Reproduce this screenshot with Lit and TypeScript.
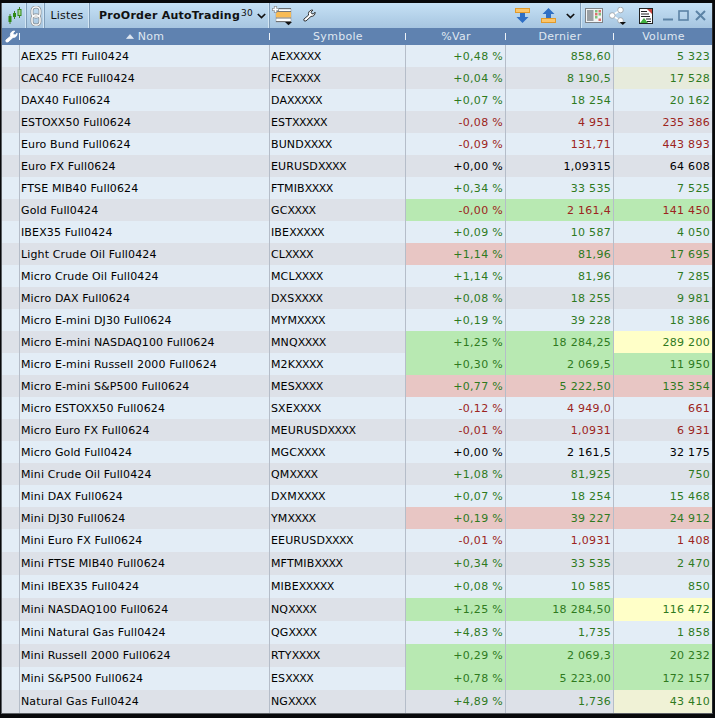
import { LitElement, html, css } from "lit";
import { customElement } from "lit/decorators.js";

type Tone = "up" | "down" | "flat";
type Row = [string, string, string, string, string, Tone, string?, string?, string?];

const G = "g", R = "r", Y = "y", P = "p", Q = "q";
const rows: Row[] = [
  ["AEX25 FTI Full0424", "AEXXXXX", "+0,48 %", "858,60", "5 323", "up"],
  ["CAC40 FCE Full0424", "FCEXXXX", "+0,04 %", "8 190,5", "17 528", "up", "", "", P],
  ["DAX40 Full0624", "DAXXXXX", "+0,07 %", "18 254", "20 162", "up"],
  ["ESTOXX50 Full0624", "ESTXXXXX", "-0,08 %", "4 951", "235 386", "down"],
  ["Euro Bund Full0624", "BUNDXXXX", "-0,09 %", "131,71", "443 893", "down"],
  ["Euro FX Full0624", "EURUSDXXXX", "+0,00 %", "1,09315", "64 608", "flat"],
  ["FTSE MIB40 Full0624", "FTMIBXXXX", "+0,34 %", "33 535", "7 525", "up"],
  ["Gold Full0424", "GCXXXX", "-0,00 %", "2 161,4", "141 450", "down", G, G, G],
  ["IBEX35 Full0424", "IBEXXXXX", "+0,09 %", "10 587", "4 050", "up"],
  ["Light Crude Oil Full0424", "CLXXXX", "+1,14 %", "81,96", "17 695", "up", R, R, R],
  ["Micro Crude Oil Full0424", "MCLXXXX", "+1,14 %", "81,96", "7 285", "up"],
  ["Micro DAX Full0624", "DXSXXXX", "+0,08 %", "18 255", "9 981", "up"],
  ["Micro E-mini DJ30 Full0624", "MYMXXXX", "+0,19 %", "39 228", "18 386", "up"],
  ["Micro E-mini NASDAQ100 Full0624", "MNQXXXX", "+1,25 %", "18 284,25", "289 200", "up", G, G, Y],
  ["Micro E-mini Russell 2000 Full0624", "M2KXXXX", "+0,30 %", "2 069,5", "11 950", "up", G, G, G],
  ["Micro E-mini S&P500 Full0624", "MESXXXX", "+0,77 %", "5 222,50", "135 354", "up", R, R, R],
  ["Micro ESTOXX50 Full0624", "SXEXXXX", "-0,12 %", "4 949,0", "661", "down"],
  ["Micro Euro FX Full0624", "MEURUSDXXXX", "-0,01 %", "1,0931", "6 931", "down"],
  ["Micro Gold Full0424", "MGCXXXX", "+0,00 %", "2 161,5", "32 175", "flat"],
  ["Mini Crude Oil Full0424", "QMXXXX", "+1,08 %", "81,925", "750", "up"],
  ["Mini DAX Full0624", "DXMXXXX", "+0,07 %", "18 254", "15 468", "up"],
  ["Mini DJ30 Full0624", "YMXXXX", "+0,19 %", "39 227", "24 912", "up", R, R, R],
  ["Mini Euro FX Full0624", "EEURUSDXXXX", "-0,01 %", "1,0931", "1 408", "down"],
  ["Mini FTSE MIB40 Full0624", "MFTMIBXXXX", "+0,34 %", "33 535", "2 470", "up"],
  ["Mini IBEX35 Full0424", "MIBEXXXXX", "+0,08 %", "10 585", "850", "up"],
  ["Mini NASDAQ100 Full0624", "NQXXXX", "+1,25 %", "18 284,50", "116 472", "up", G, G, Y],
  ["Mini Natural Gas Full0424", "QGXXXX", "+4,83 %", "1,735", "1 858", "up"],
  ["Mini Russell 2000 Full0624", "RTYXXXX", "+0,29 %", "2 069,3", "20 232", "up", G, G, G],
  ["Mini S&P500 Full0624", "ESXXXX", "+0,78 %", "5 223,00", "172 157", "up", G, G, G],
  ["Natural Gas Full0424", "NGXXXX", "+4,89 %", "1,736", "43 410", "up", "", "", Q],
];

const wrench = (w: number, fill: string, stroke: string) => html`<svg width=${w} height=${w} viewBox="0 0 14 14"><path d="M1.2 12.8 L0.9 10.9 L6 6.6 C5.4 4.2 6.4 1.8 9.2 1.2 L10.6 1.2 L8.6 3.4 L9.4 5 L11.2 5.4 L13 3.4 C13.3 6 11.6 8.2 8.6 8 L3.2 12.9 Z" fill=${fill} stroke=${stroke} stroke-width=".9" stroke-linejoin="round"/></svg>`;

const candles = html`<svg width="15" height="17" viewBox="0 0 15 17"><path d="M3 7v10M7.5 4v8M12.5 0v11" stroke="#3d7f2a" stroke-width="1"/><rect x="1.5" y="9" width="3" height="6" fill="#2f8a14"/><rect x="6" y="6" width="3" height="4" fill="#2f8a14"/><rect x="11" y="2.5" width="3" height="6" fill="#a9d492" stroke="#2f8a14"/></svg>`;
const chain = html`<svg width="12" height="20" viewBox="0 0 12 20"><g fill="none"><rect x="2" y="1" width="8" height="10" rx="3.6" stroke="#85898d" stroke-width="2.8"/><rect x="2" y="9" width="8" height="10" rx="3.6" stroke="#85898d" stroke-width="2.8"/><rect x="2" y="1" width="8" height="10" rx="3.6" stroke="#fafbfb" stroke-width="1.5"/><rect x="2" y="9" width="8" height="10" rx="3.6" stroke="#fafbfb" stroke-width="1.5"/></g></svg>`;
const chevron = html`<svg width="9" height="6" viewBox="0 0 9 6"><path d="M.8 1l3.7 3.5L8.2 1" fill="none" stroke="#111" stroke-width="1.7"/></svg>`;
const addList = html`<svg width="21" height="20" viewBox="0 0 21 20"><rect x="4" y="3" width="15" height="13" fill="#fff" stroke="#9aa0a5" stroke-width=".6"/><rect x="4" y="6" width="15" height="5.5" fill="#f8bb55"/><path d="M4 2.5h15M4 5.5h15M4 12h15M4 15.5h15" stroke="#555" stroke-width=".8"/><path d="M0 3.5h7M3.5 0v7" stroke="#8f9498" stroke-width="3.2"/><path d="M.8 3.5h5.4M3.5.8v5.4" stroke="#fff" stroke-width="1.5"/><path d="M13 16h7l-3.5 3.2z" fill="#111"/></svg>`;
const arrowDown = html`<svg width="15" height="15" viewBox="0 0 15 15"><rect x=".5" y=".5" width="14" height="4" fill="#fbc56a" stroke="#e29a2a"/><path d="M5 5h5v4h3.5l-6 6-6-6H5z" fill="#2f6fc4"/></svg>`;
const arrowUp = html`<svg width="15" height="15" viewBox="0 0 15 15"><rect x=".5" y="10.5" width="14" height="4" fill="#fbc56a" stroke="#e29a2a"/><path d="M5 10V6H1.5l6-6 6 6H10v4z" fill="#2f6fc4"/></svg>`;
const gridIcon = html`<svg width="18" height="15" viewBox="0 0 18 15"><rect x=".5" y=".5" width="17" height="14" fill="#f2f4f5" stroke="#7d8287"/><rect x="2" y="2" width="6.5" height="11" fill="#9aa0a5"/><g fill="#7fc27c"><rect x="10" y="2" width="2.5" height="2.5"/><rect x="10" y="8" width="2.5" height="2.5"/><rect x="13.5" y="5" width="2.5" height="2.5"/></g><g fill="#d9706a"><rect x="13.5" y="2" width="2.5" height="2.5"/><rect x="10" y="5" width="2.5" height="2.5"/><rect x="13.5" y="10.5" width="2.5" height="2.5"/></g></svg>`;
const share = html`<svg width="17" height="18" viewBox="0 0 17 18"><path d="M3 8.5L11.5 3M3 8.5l8.5 5" stroke="#fff" stroke-width="1.5"/><g fill="#fff" stroke="#8f9498" stroke-width=".7"><circle cx="3.2" cy="8.5" r="2.8"/><circle cx="11.5" cy="3" r="2.8"/><circle cx="11.5" cy="13.5" r="2.8"/></g><path d="M10.5 15h6.5l-3.2 3z" fill="#111"/></svg>`;
const report = html`<svg width="14" height="16" viewBox="0 0 14 16"><rect x=".5" y=".5" width="13" height="15" fill="#fff" stroke="#222"/><path d="M2 3.5h6M2 6h8M2 8.5h9M7 11h5M8 13.5h4" stroke="#222"/><path d="M8 1h5v5z" fill="#c8443c"/><path d="M1 15l4-5 4 5z" fill="#3fae3c"/></svg>`;
const sortUp = html`<svg width="8" height="5" viewBox="0 0 8 5"><path d="M4 .5L7.5 4.5H.5z" fill="#dfe7f1" stroke="#f4f7fa" stroke-width=".5"/></svg>`;

const symbol = (s: string) => {
  const m = s.match(/^(.*?)(X+)$/);
  return m ? html`${m[1]}<span class="xs">${m[2]}</span>` : s;
};

@customElement("app-root")
export class AppRoot extends LitElement {
  static styles = css`
    :host { display: block; width: 715px; height: 718px; background: #08090b; overflow: hidden;
      font: 11px "DejaVu Sans", sans-serif; --cols: 18px 250px 136px 100px 108px 98px; }
    .win { margin: 3px 2px 0 1px; height: 711px; box-sizing: border-box; border-left: 1px solid #5c6065; border-right: 1px solid #2a2c30; border-bottom: 1px solid #5c6065; display: flex; flex-direction: column; }
    .bar { height: 25px; flex: none; display: flex; background: linear-gradient(#c6e1f5, #a6c5e0); color: #111; white-space: nowrap; }
    .seg { display: flex; align-items: center; justify-content: center; box-sizing: border-box; border-right: 1px solid #7f9db9; box-shadow: inset -1px 0 0 #d3e6f4; flex: none; }
    .s1 { width: 25px; } .s2 { width: 18px; } .s3 { width: 45px; letter-spacing: .25px; } .s4 { width: 180px; justify-content: flex-start; padding-left: 9px; font-weight: 700; letter-spacing: .25px; }
    .s4 sup { font-size: 9px; font-weight: 400; letter-spacing: .3px; margin: 0 4px 0 1px; line-height: 1; position: relative; top: -2px; vertical-align: baseline; }
    .plain { display: flex; align-items: center; flex: none; }
    .add { margin-left: 2px; } .wr { margin-left: 10px; }
    .grow { flex: 1; }
    .up-d { margin-right: 11px; } .chev { margin: 0 2px 0 10px; }
    .rightgroup { width: 132px; box-sizing: border-box; border-left: 1px solid #7f9db9; box-shadow: inset 1px 0 0 #d3e6f4; display: flex; align-items: center; padding-left: 4px; flex: none; margin-left: 3px; }
    .sh { margin-left: 6px; } .rp { margin-left: 13px; }
    .ctl { margin-left: 10px; display: flex; gap: 4px; align-items: center; }
    .cl { margin-left: 2px; }
    .head { height: 17px; flex: none; display: grid; grid-template-columns: var(--cols); background: #5f82b0; color: #dfe7f1; letter-spacing: .3px; }
    .h { display: flex; align-items: center; }
    .h .lab { flex: 1; display: flex; align-items: center; justify-content: center; gap: 4px; padding-left: 1px; }
    .h i { width: 1px; height: 7px; background: #eef3f8; flex: none; }
    .row { display: grid; grid-template-columns: var(--cols); height: 22px; line-height: 24px; color: #000; white-space: pre; }
    .row.tall { height: 23px; line-height: 23px; }
    .row.odd { background: #e3edf6; } .row.even { background: #dde1e8; }
    .c { border-right: 1px solid #b5bdc9; box-sizing: border-box; overflow: hidden; }
    .c:last-child { border-right: 0; }
    .txt { padding-left: 1px; letter-spacing: .13px; }
    .xs { letter-spacing: -.54px; }
    .num { text-align: right; padding-right: 2px; letter-spacing: .3px; }
    .up .num { color: #2f7a1e; } .down .num { color: #9c2420; } .flat .num { color: #000; }
    .g { background: #b8e9b2; } .r { background: #e8c6c4; } .y { background: #ffffc8; } .p { background: #e7ebdc; } .q { background: #f0f2d6; }
  `;

  render() {
    return html`<div class="win">
      <div class="bar">
        <div class="seg s1">${candles}</div>
        <div class="seg s2">${chain}</div>
        <div class="seg s3">Listes</div>
        <div class="seg s4">ProOrder AutoTrading<sup>30</sup>${chevron}</div>
        <div class="plain add">${addList}</div>
        <div class="plain wr">${wrench(13, "#fff", "#111")}</div>
        <div class="grow"></div>
        <div class="plain up-d">${arrowDown}</div>
        <div class="plain">${arrowUp}</div>
        <div class="plain chev">${chevron}</div>
        <div class="rightgroup">
          ${gridIcon}
          <span class="plain sh">${share}</span>
          <span class="plain rp">${report}</span>
          <span class="ctl">
            <svg width="11" height="11" viewBox="0 0 11 11"><path d="M0 9.5h10" stroke="#5c83a5" stroke-width="2"/></svg>
            <svg width="11" height="11" viewBox="0 0 11 11"><rect x="1" y="1" width="9" height="9" fill="none" stroke="#5c83a5" stroke-width="1.6"/></svg>
            <svg class="cl" width="11" height="11" viewBox="0 0 11 11"><path d="M1 1l9 9M10 1l-9 9" stroke="#5c83a5" stroke-width="2"/></svg>
          </span>
        </div>
      </div>
      <div class="head">
        <div class="h"><span class="lab">${wrench(13, "#fff", "#fff")}</span><i></i></div>
        <div class="h"><span class="lab">${sortUp}<span>Nom</span></span><i></i></div>
        <div class="h"><span class="lab">Symbole</span><i></i></div>
        <div class="h"><span class="lab">%Var</span><i></i></div>
        <div class="h"><span class="lab">Dernier</span><i></i></div>
        <div class="h"><span class="lab">Volume</span></div>
      </div>
      ${rows.map((r, i) => html`<div class="row ${i % 2 ? "even" : "odd"} ${i >= 22 ? "tall" : ""} ${r[5]}">
        <div class="c"></div>
        <div class="c txt">${r[0]}</div>
        <div class="c txt">${symbol(r[1])}</div>
        <div class="c num ${r[6] ?? ""}">${r[2]}</div>
        <div class="c num ${r[7] ?? ""}">${r[3]}</div>
        <div class="c num ${r[8] ?? ""}">${r[4]}</div>
      </div>`)}
    </div>`;
  }
}
